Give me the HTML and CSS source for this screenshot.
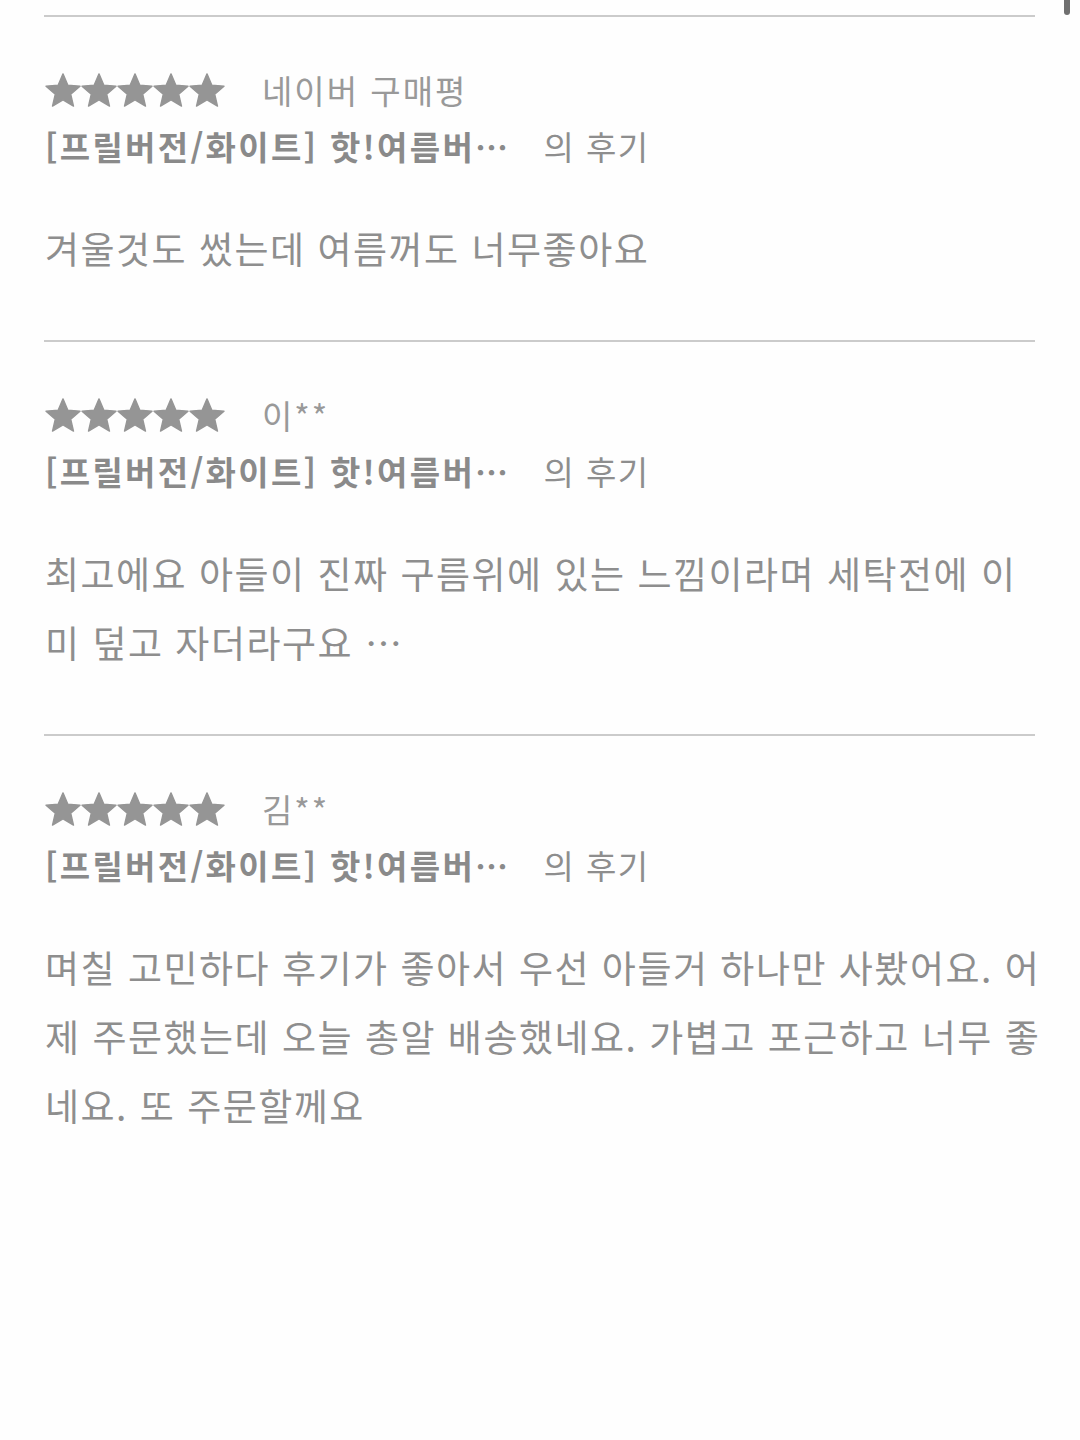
FILE: index.html
```html
<!DOCTYPE html>
<html lang="ko">
<head>
    <meta charset="UTF-8">
    <meta name="viewport" content="width=device-width, initial-scale=1.0">
    <title>구매평</title>
    <link rel="stylesheet" href="styles.css">
</head>
<body>
    <div class="scroll-thumb"></div>

    <div class="review-list">
        <div class="review">
            <div class="review-meta">
                <span class="stars">
                    <svg viewBox="1.5 1.5 21 20"><path d="M12 17.27L18.18 21l-1.64-7.03L22 9.24l-7.19-.61L12 2 9.19 8.63 2 9.24l5.46 4.73L5.82 21z"/></svg>
                    <svg viewBox="1.5 1.5 21 20"><path d="M12 17.27L18.18 21l-1.64-7.03L22 9.24l-7.19-.61L12 2 9.19 8.63 2 9.24l5.46 4.73L5.82 21z"/></svg>
                    <svg viewBox="1.5 1.5 21 20"><path d="M12 17.27L18.18 21l-1.64-7.03L22 9.24l-7.19-.61L12 2 9.19 8.63 2 9.24l5.46 4.73L5.82 21z"/></svg>
                    <svg viewBox="1.5 1.5 21 20"><path d="M12 17.27L18.18 21l-1.64-7.03L22 9.24l-7.19-.61L12 2 9.19 8.63 2 9.24l5.46 4.73L5.82 21z"/></svg>
                    <svg viewBox="1.5 1.5 21 20"><path d="M12 17.27L18.18 21l-1.64-7.03L22 9.24l-7.19-.61L12 2 9.19 8.63 2 9.24l5.46 4.73L5.82 21z"/></svg>
                </span>
                <span class="author">네이버 구매평</span>
            </div>
            <div class="review-product">
                <span class="product-name">[프릴버전/화이트] 핫!여름버…</span>
                <span class="product-suffix">의 후기</span>
            </div>
            <p class="review-text">겨울것도 썼는데 여름꺼도 너무좋아요</p>
        </div>

        <div class="review">
            <div class="review-meta">
                <span class="stars">
                    <svg viewBox="1.5 1.5 21 20"><path d="M12 17.27L18.18 21l-1.64-7.03L22 9.24l-7.19-.61L12 2 9.19 8.63 2 9.24l5.46 4.73L5.82 21z"/></svg>
                    <svg viewBox="1.5 1.5 21 20"><path d="M12 17.27L18.18 21l-1.64-7.03L22 9.24l-7.19-.61L12 2 9.19 8.63 2 9.24l5.46 4.73L5.82 21z"/></svg>
                    <svg viewBox="1.5 1.5 21 20"><path d="M12 17.27L18.18 21l-1.64-7.03L22 9.24l-7.19-.61L12 2 9.19 8.63 2 9.24l5.46 4.73L5.82 21z"/></svg>
                    <svg viewBox="1.5 1.5 21 20"><path d="M12 17.27L18.18 21l-1.64-7.03L22 9.24l-7.19-.61L12 2 9.19 8.63 2 9.24l5.46 4.73L5.82 21z"/></svg>
                    <svg viewBox="1.5 1.5 21 20"><path d="M12 17.27L18.18 21l-1.64-7.03L22 9.24l-7.19-.61L12 2 9.19 8.63 2 9.24l5.46 4.73L5.82 21z"/></svg>
                </span>
                <span class="author">이**</span>
            </div>
            <div class="review-product">
                <span class="product-name">[프릴버전/화이트] 핫!여름버…</span>
                <span class="product-suffix">의 후기</span>
            </div>
            <p class="review-text">최고에요 아들이 진짜 구름위에 있는 느낌이라며 세탁전에 이미 덮고 자더라구요 …</p>
        </div>

        <div class="review">
            <div class="review-meta">
                <span class="stars">
                    <svg viewBox="1.5 1.5 21 20"><path d="M12 17.27L18.18 21l-1.64-7.03L22 9.24l-7.19-.61L12 2 9.19 8.63 2 9.24l5.46 4.73L5.82 21z"/></svg>
                    <svg viewBox="1.5 1.5 21 20"><path d="M12 17.27L18.18 21l-1.64-7.03L22 9.24l-7.19-.61L12 2 9.19 8.63 2 9.24l5.46 4.73L5.82 21z"/></svg>
                    <svg viewBox="1.5 1.5 21 20"><path d="M12 17.27L18.18 21l-1.64-7.03L22 9.24l-7.19-.61L12 2 9.19 8.63 2 9.24l5.46 4.73L5.82 21z"/></svg>
                    <svg viewBox="1.5 1.5 21 20"><path d="M12 17.27L18.18 21l-1.64-7.03L22 9.24l-7.19-.61L12 2 9.19 8.63 2 9.24l5.46 4.73L5.82 21z"/></svg>
                    <svg viewBox="1.5 1.5 21 20"><path d="M12 17.27L18.18 21l-1.64-7.03L22 9.24l-7.19-.61L12 2 9.19 8.63 2 9.24l5.46 4.73L5.82 21z"/></svg>
                </span>
                <span class="author">김**</span>
            </div>
            <div class="review-product">
                <span class="product-name">[프릴버전/화이트] 핫!여름버…</span>
                <span class="product-suffix">의 후기</span>
            </div>
            <p class="review-text">며칠 고민하다 후기가 좋아서 우선 아들거 하나만 사봤어요. 어제 주문했는데 오늘 총알 배송했네요. 가볍고 포근하고 너무 좋네요. 또 주문할께요</p>
        </div>
    </div>
</body>
</html>
```

FILE: styles.css
```css
body {
    font-family: "Noto Sans CJK KR", "Noto Sans", sans-serif;
    margin: 0;
    background-color: #fefefe;
    color: #8e8e8e;
}
.scroll-thumb {
    position: absolute;
    top: 0;
    right: 10px;
    width: 6px;
    height: 15px;
    background-color: #707070;
    border-radius: 0 0 3px 3px;
}
.review-list {
    padding: 15px 45px 0 44px;
}
.review {
    border-top: 2px solid #cbcbcb;
    padding: 45px 0 57px 1px;
}
.review-meta,
.review-product {
    display: flex;
    align-items: center;
    height: 56px;
    font-size: 33px;
    white-space: nowrap;
}
.stars {
    display: flex;
    margin-right: 37px;
}
.stars svg {
    width: 36px;
    height: 34px;
    fill: #959595;
    stroke: #959595;
    stroke-width: 0.8;
    stroke-linejoin: round;
}
.author {
    color: #999;
    letter-spacing: 2px;
}
.product-name {
    font-weight: bold;
    color: #8a8a8a;
    letter-spacing: 2.3px;
}
.product-suffix {
    margin-left: 33px;
    color: #8e8e8e;
    letter-spacing: 1.5px;
}
.review-text {
    margin: 40px -6px 0 0;
    font-size: 37px;
    line-height: 69px;
    letter-spacing: 1.5px;
    word-break: break-all;
}
```
